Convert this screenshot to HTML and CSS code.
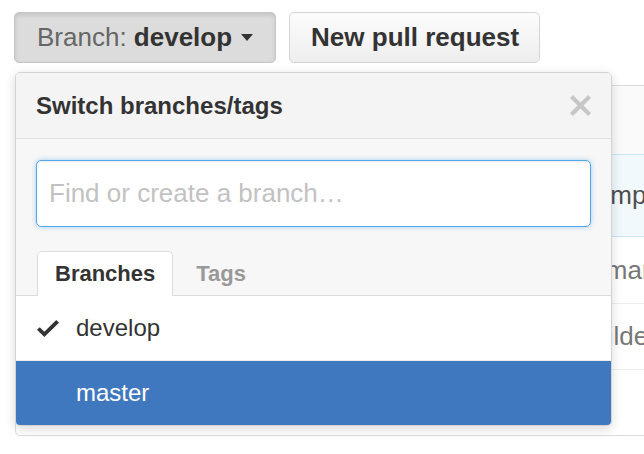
FILE: index.html
```html
<!DOCTYPE html>
<html>
<head>
<meta charset="utf-8">
<link rel="stylesheet" href="styles.css">
</head>
<body>
<div class="page">
  <div class="toolbar">
    <div class="branch-select">
      <button class="btn btn-selected"><span class="btn-text"><span class="label">Branch:</span> <strong>develop</strong></span><span class="caret"></span></button>
      <div class="menu">
        <div class="menu-header">
          <span class="menu-title">Switch branches/tags</span>
          <svg class="close" width="21" height="21" viewBox="0.77 2.77 10.46 10.46"><path d="M7.48 8l3.75 3.75-1.48 1.48L6 9.48l-3.75 3.75-1.48-1.48L4.52 8 .77 4.25l1.48-1.48L6 6.52l3.75-3.75 1.48 1.48L7.48 8z"/></svg>
        </div>
        <div class="menu-filter">
          <input class="filter-input" type="text" placeholder="Find or create a branch…">
        </div>
        <div class="menu-tabs">
          <span class="tab active">Branches</span>
          <span class="tab">Tags</span>
        </div>
        <div class="menu-list">
          <div class="item item-current">
            <span class="item-icon"><svg width="22" height="17" viewBox="0 3.5 12 9.5" preserveAspectRatio="none"><path d="M12 5l-8 8-4-4 1.5-1.5L4 10l6.5-6.5L12 5z"/></svg></span>
            <span class="item-name">develop</span>
          </div>
          <div class="item item-focus">
            <span class="item-icon"></span>
            <span class="item-name">master</span>
          </div>
        </div>
      </div>
    </div>
    <button class="btn btn-pr"><span class="btn-text"><strong>New pull request</strong></span></button>
  </div>

  <div class="files">
    <div class="summary"></div>
    <div class="commit">
      <span></span>
      <span class="msg msg-commit">Improve</span>
    </div>
    <div class="file">
      <span></span>
      <span class="msg msg-primary">Primary</span>
    </div>
    <div class="file">
      <span></span>
      <span class="msg msg-builder">Builder</span>
    </div>
    <div class="file">
      <span></span>
      <span class="msg"></span>
    </div>
  </div>
</div>
</body>
</html>
```

FILE: styles.css
```css
html, body {
  margin: 0;
  padding: 0;
}

body {
  background: #fff;
  font-family: "Liberation Sans", Arial, sans-serif;
  color: #333;
  width: 644px;
  height: 454px;
  overflow: hidden;
}

.toolbar {
  display: flex;
  gap: 13px;
  padding: 12px 0 0 14px;
}

.branch-select {
  position: relative;
}

.btn {
  height: 51px;
  box-sizing: border-box;
  display: flex;
  align-items: center;
  padding: 0 22px;
  border: 1px solid #d5d5d5;
  border-radius: 5px;
  background: linear-gradient(#fcfcfc, #eeeeee);
  font-family: "Liberation Sans", Arial, sans-serif;
  font-size: 26px;
  color: #333;
  white-space: nowrap;
}

.btn-pr {
  padding: 0 20px 0 21px;
}

.btn-selected {
  background: #dcdcdc;
  border-color: #c6c6c6;
  box-shadow: inset 0 2px 4px rgba(0, 0, 0, 0.12);
}

.label {
  color: #666;
}

.caret {
  width: 0;
  height: 0;
  margin-left: 9px;
  border-top: 7px solid #333;
  border-left: 6px solid transparent;
  border-right: 6px solid transparent;
}

/* dropdown menu */
.menu {
  position: absolute;
  top: calc(100% + 9px);
  left: 1px;
  width: 597px;
  box-sizing: border-box;
  border: 1px solid #d3d3d3;
  border-radius: 5px;
  background: #fff;
  box-shadow: 0 3px 12px rgba(0, 0, 0, 0.15);
  overflow: hidden;
  z-index: 10;
}

.menu-header {
  height: 65px;
  display: flex;
  align-items: center;
  justify-content: space-between;
  padding: 0 20px;
  background: #f4f4f4;
  border-bottom: 1px solid #e1e1e1;
}

.menu-title {
  font-size: 24px;
  font-weight: bold;
  color: #333;
}

.close {
  fill: #c6c6c6;
}

.menu-filter {
  padding: 21px 20px 24px;
  background: #f7f7f7;
}

.filter-input {
  display: block;
  width: 100%;
  height: 67px;
  box-sizing: border-box;
  margin: 0;
  padding: 0 12px;
  border: 1px solid #51a7e8;
  border-radius: 5px;
  background: #fff;
  font-family: "Liberation Sans", Arial, sans-serif;
  font-size: 26px;
  color: #333;
  outline: none;
  box-shadow: inset 0 1px 2px rgba(0, 0, 0, 0.075), 0 0 5px rgba(81, 167, 232, 0.5);
}

.filter-input::placeholder {
  color: #c2c2c2;
}

.menu-tabs {
  display: flex;
  align-items: flex-end;
  height: 44px;
  padding-left: 21px;
  background: #f7f7f7;
  border-bottom: 1px solid #dddddd;
}

.tab {
  height: 45px;
  box-sizing: border-box;
  display: flex;
  align-items: center;
  padding: 0 17px;
  margin-bottom: -1px;
  border: 1px solid transparent;
  border-bottom: 0;
  border-radius: 5px 5px 0 0;
  font-size: 22px;
  font-weight: bold;
  color: #999;
}

.tab + .tab {
  margin-left: 5px;
}

.tab.active {
  background: #fff;
  border-color: #dddddd;
  color: #333;
}

.item {
  height: 64px;
  display: flex;
  align-items: center;
  padding-left: 21px;
  font-size: 24px;
  color: #333;
}

.item-current {
  border-bottom: 1px solid #eeeeee;
}

.item-icon {
  width: 39px;
  display: flex;
  align-items: center;
}

.item-icon svg {
  fill: #333;
}

.item-focus {
  background: #4078c0;
  color: #fff;
}

/* file list behind the menu */
.files {
  margin: 22px 0 0 15px;
  width: 700px;
  border: 1px solid #dddddd;
  border-radius: 5px;
}

.summary {
  height: 68px;
  background: #fafafa;
}

.commit,
.file {
  display: grid;
  grid-template-columns: 558px 1fr;
  align-items: center;
  font-size: 26px;
  white-space: nowrap;
}

.commit {
  height: 83px;
  box-sizing: border-box;
  background: #f2f9fc;
  border-top: 1px solid #c9e6f2;
  border-bottom: 1px solid #c9e6f2;
  color: #4f4f4f;
}

.file {
  height: 66px;
  box-sizing: border-box;
  color: #777;
}

.file + .file {
  border-top: 1px solid #eeeeee;
}

.msg-commit {
  margin-left: 29px;
}

.msg-builder {
  margin-left: 2px;
}
```
